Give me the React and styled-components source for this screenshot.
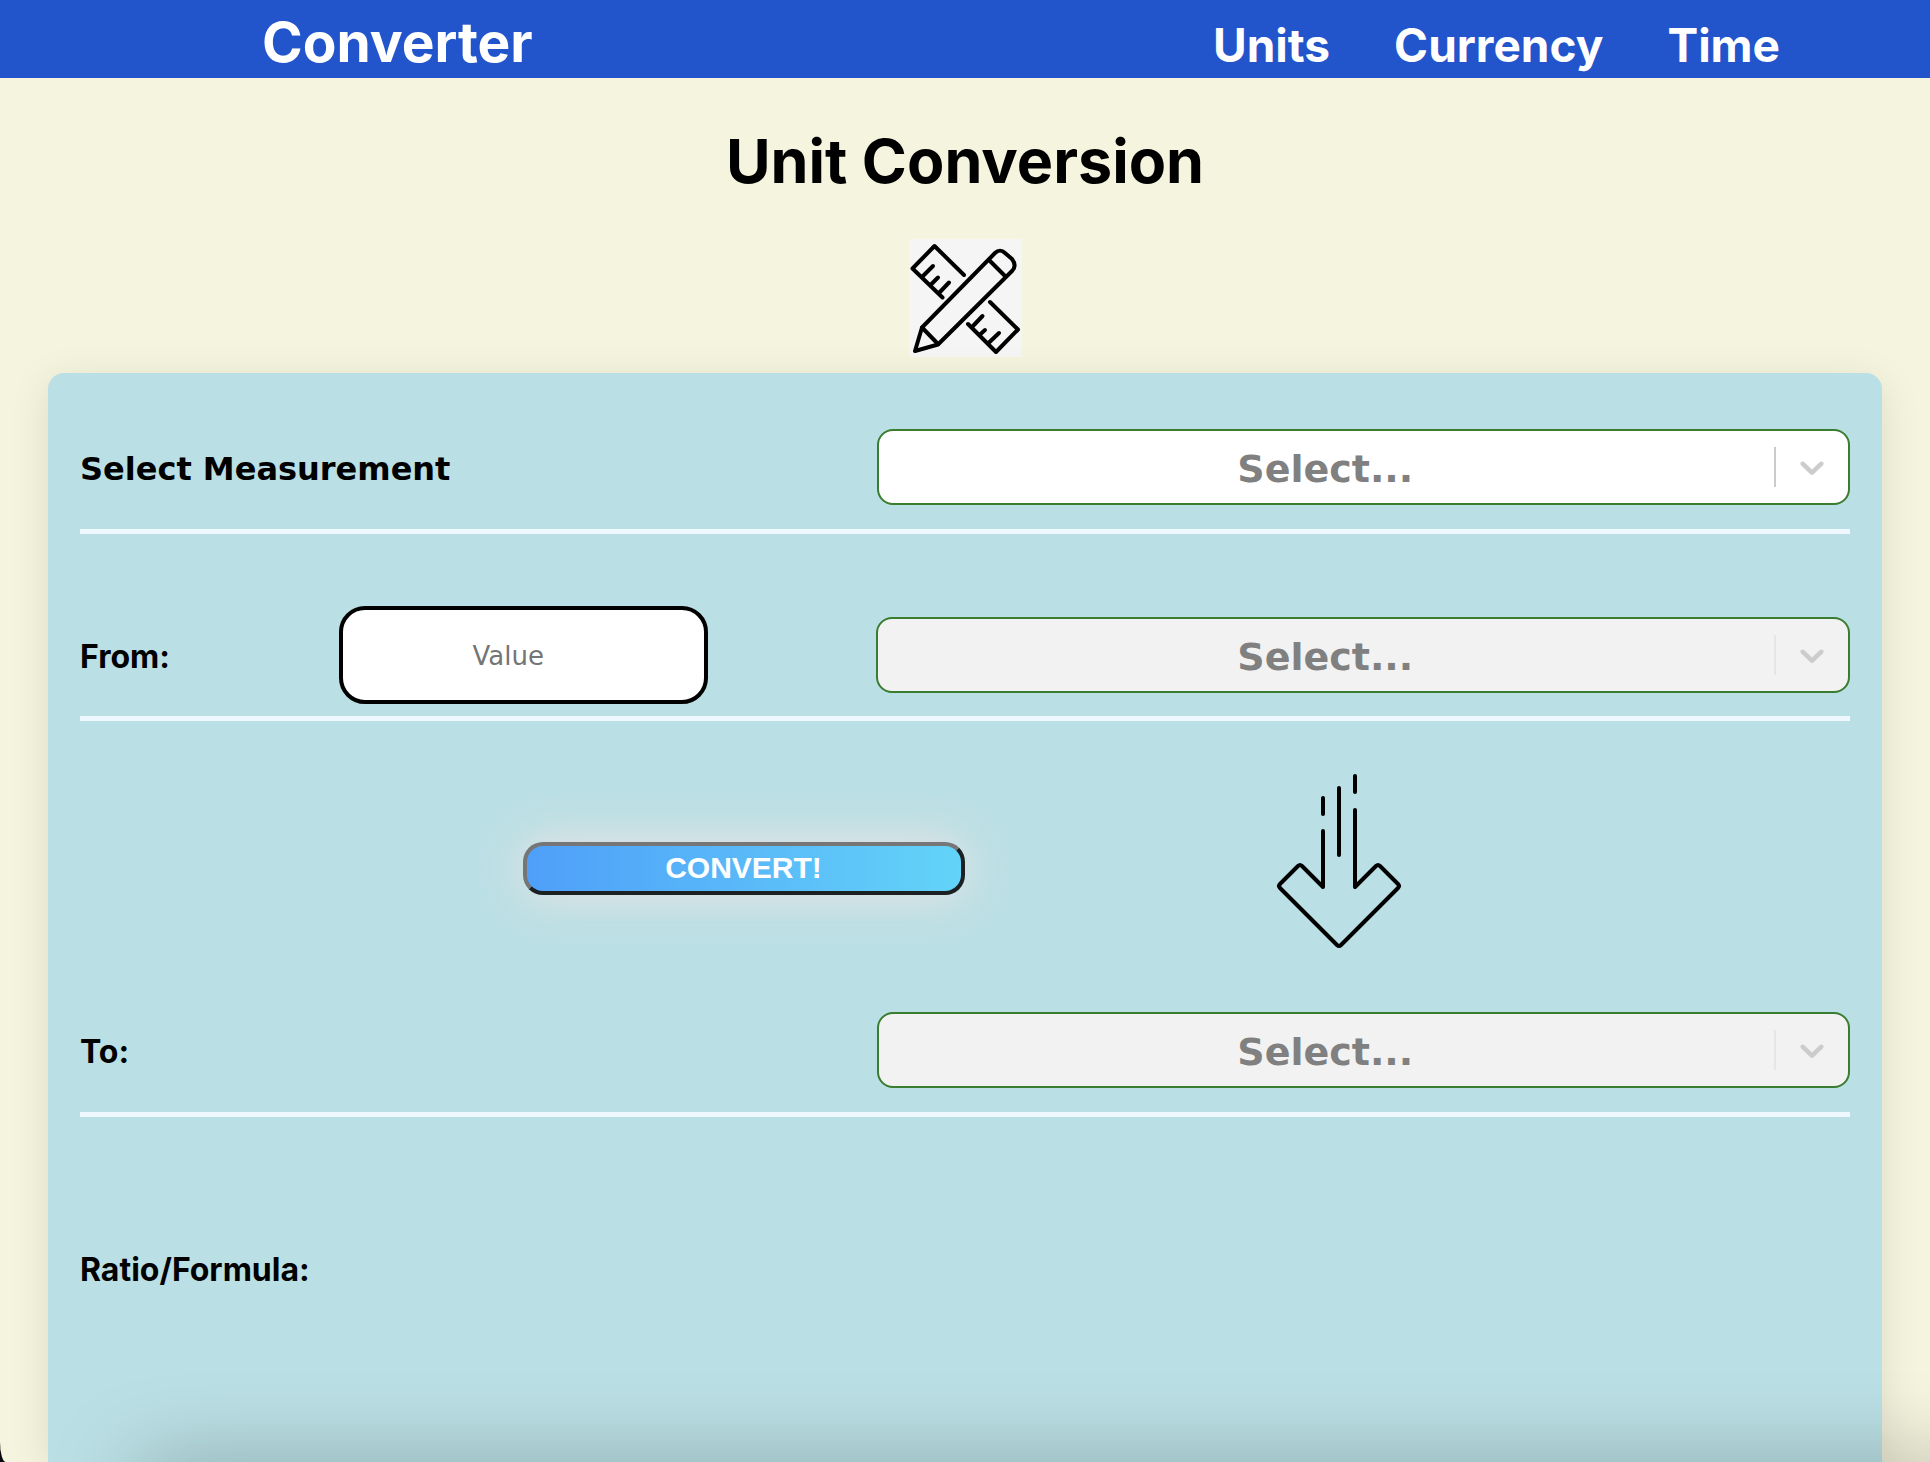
import React from "react";
import styled, { createGlobalStyle } from "styled-components";

const heading = `Inter, "Liberation Sans", sans-serif`;
const verdana = `"DejaVu Sans", Verdana, sans-serif`;

const GlobalStyle = createGlobalStyle`
  *, *::before, *::after { box-sizing: border-box; }
  body { margin: 0; background: #05070c; font-family: ${heading}; color: #000; }
`;

const Page = styled.div`
  min-height: 100vh;
  display: flex;
  flex-direction: column;
  background: #f5f4de;
  border-bottom-left-radius: 6px 20px;
  overflow: hidden;
`;

const Header = styled.header`
  display: flex;
  justify-content: space-between;
  align-items: baseline;
  height: 78px;
  padding: 8px 150px 0 262px;
  background: #2255cc;
  color: #fff;
`;

const Brand = styled.a`
  font-size: 55px;
  line-height: 68px;
  font-weight: 700;
  color: inherit;
  text-decoration: none;
`;

const Nav = styled.nav`
  display: flex;
  gap: 64px;
`;

const NavLink = styled.a`
  font-size: 46px;
  line-height: 60px;
  font-weight: 700;
  color: inherit;
  text-decoration: none;
`;

const Main = styled.main`
  flex: 1;
  display: flex;
  flex-direction: column;
  align-items: center;
  padding: 44px 48px 0;
`;

const Title = styled.h1`
  margin: 0 0 39px;
  font-size: 61px;
  line-height: 78px;
  font-weight: 700;
`;

const Emblem = styled.svg`
  display: block;
  width: 113px;
  height: 118px;
  margin-bottom: 16px;
  background: #f5f5f5;
`;

const Card = styled.form`
  flex: 1;
  width: 100%;
  padding: 56px 32px 0;
  background: #badfe4;
  border-radius: 16px 16px 0 0;
  box-shadow: 0 8px 40px rgba(0, 0, 0, 0.1);
`;

const Row = styled.div`
  display: flex;
  justify-content: space-between;
  align-items: center;
  height: ${(p) => p.$height}px;
`;

const Rule = styled.hr`
  height: 5px;
  margin: ${(p) => p.$top}px 0 ${(p) => p.$bottom}px;
  border: 0;
  background: #f0f8ff;
`;

const Label = styled.label`
  padding-top: 3px;
  font-family: ${(p) => (p.$wide ? verdana : heading)};
  font-size: 32px;
  line-height: 40px;
  font-weight: 700;
`;

const ValueInput = styled.input`
  width: 369px;
  height: 98px;
  padding: 2px 30px 0 0;
  border: 4px solid #000;
  border-radius: 26px;
  background: #fff;
  font-family: ${verdana};
  font-size: 26px;
  text-align: center;
  &::placeholder { color: #757575; opacity: 1; }
`;

const SelectBox = styled.div`
  position: relative;
  width: 55%;
`;

const Dropdown = styled.select`
  display: block;
  appearance: none;
  width: 100%;
  height: 76px;
  padding: 4px 76px 0 0;
  border: 2px solid #3a7c30;
  border-radius: 16px;
  background: #fff;
  color: #808080;
  font-family: ${verdana};
  font-size: 38px;
  font-weight: 700;
  text-align: center;
  text-align-last: center;
  opacity: 1;
  &:disabled { background: #f2f2f2; }
`;

const Indicator = styled.span`
  position: absolute;
  top: 18px;
  right: 18px;
  display: flex;
  padding-left: 16px;
  border-left: 2px solid ${(p) => (p.$muted ? "#e6e6e6" : "#cccccc")};
  color: #cccccc;
  pointer-events: none;
  svg { display: block; width: 40px; height: 40px; }
`;

const ConvertRow = styled.div`
  display: flex;
  align-items: center;
  gap: 275px;
  height: 291px;
  padding: 3px 0 0 25%;
`;

const ConvertButton = styled.button`
  width: 442px;
  height: 53px;
  padding: 0;
  border: 4px solid;
  border-color: #767676 #1b2023 #1b2023 #767676;
  border-radius: 20px;
  background: linear-gradient(90deg, #4f9ff9, #63d3f8);
  box-shadow: 0 0 48px #eee4e6;
  color: #fff;
  font-family: "Liberation Sans", Arial, sans-serif;
  font-size: 30px;
  font-weight: 700;
`;

const Arrow = styled.svg`
  display: block;
  width: 200px;
  height: 234px;
`;

const DockShade = styled.div`
  position: fixed;
  left: 140px;
  right: -60px;
  bottom: -60px;
  height: 50px;
  pointer-events: none;
  box-shadow: 0 0 90px rgba(0, 0, 0, 0.35);
`;

function Select({ id, disabled, label }) {
  return (
    <SelectBox>
      <Dropdown id={id} disabled={disabled} aria-label={label} defaultValue="">
        <option value="">Select...</option>
      </Dropdown>
      <Indicator $muted={disabled} aria-hidden="true">
        <svg viewBox="0 0 20 20" fill="currentColor">
          <path d="M4.516 7.548c0.436-0.446 1.043-0.481 1.576 0l3.908 3.747 3.908-3.747c0.533-0.481 1.141-0.446 1.574 0 0.436 0.445 0.408 1.197 0 1.615-0.406 0.418-4.695 4.502-4.695 4.502-0.217 0.223-0.502 0.335-0.787 0.335s-0.57-0.112-0.789-0.335c0 0-4.287-4.084-4.695-4.502s-0.436-1.17 0-1.615z" />
        </svg>
      </Indicator>
    </SelectBox>
  );
}

export default function App() {
  return (
    <>
      <GlobalStyle />
      <Page>
        <Header>
          <Brand href="#home">Converter</Brand>
          <Nav>
            <NavLink href="#units">Units</NavLink>
            <NavLink href="#currency">Currency</NavLink>
            <NavLink href="#time">Time</NavLink>
          </Nav>
        </Header>
        <Main>
          <Title>Unit Conversion</Title>
          <Emblem viewBox="0 0 113 118" fill="none" stroke="#000" strokeWidth="4" strokeLinecap="round" strokeLinejoin="round" aria-hidden="true">
            <path d="M55 36 25.500 7 3.500 29.500 33.500 58.500" />
            <path d="M14 37 24 27M22 45.500 29 38.500M30 54 40 43.500" />
            <path d="M81 63 109 90.500 87 113 59 85" />
            <path d="M64 87 73.500 77M71 95.500 76 91M79 104.500 90 94" />
            <path d="M13 88.500 6 112 29 105.500 103 32C107 28 106 24 103 20L96 14C93 11 89 11 86 14Z" />
            <path d="M13 88.500 29 105M81 22 96 37" />
          </Emblem>
          <Card onSubmit={(e) => e.preventDefault()}>
            <Row $height={76}>
              <Label htmlFor="measurement" $wide>Select Measurement</Label>
              <Select id="measurement" />
            </Row>
            <Rule $top={24} $bottom={72} />
            <Row $height={98}>
              <Label htmlFor="value">From:</Label>
              <ValueInput id="value" inputMode="decimal" placeholder="Value" />
              <Select id="from-unit" label="From unit" disabled />
            </Row>
            <Rule $top={12} $bottom={0} />
            <ConvertRow>
              <ConvertButton type="submit">CONVERT!</ConvertButton>
              <Arrow viewBox="0 0 200 234" fill="none" stroke="#000" strokeWidth="4" strokeLinecap="round" strokeLinejoin="round" aria-hidden="true">
                <path d="M83 80V136L62 115q-2-2-4 0L40 133q-2 2 0 4L97 194q2 2 4 0L158 137q2-2 0-4L140 115q-2-2-4 0L115 136V59" />
                <path d="M83 47v16M99 37v67M115 25v16" />
              </Arrow>
            </ConvertRow>
            <Row $height={76}>
              <Label htmlFor="to-unit">To:</Label>
              <Select id="to-unit" disabled />
            </Row>
            <Rule $top={24} $bottom={130} />
            <Label as="p">Ratio/Formula:</Label>
          </Card>
        </Main>
      </Page>
      <DockShade />
    </>
  );
}
